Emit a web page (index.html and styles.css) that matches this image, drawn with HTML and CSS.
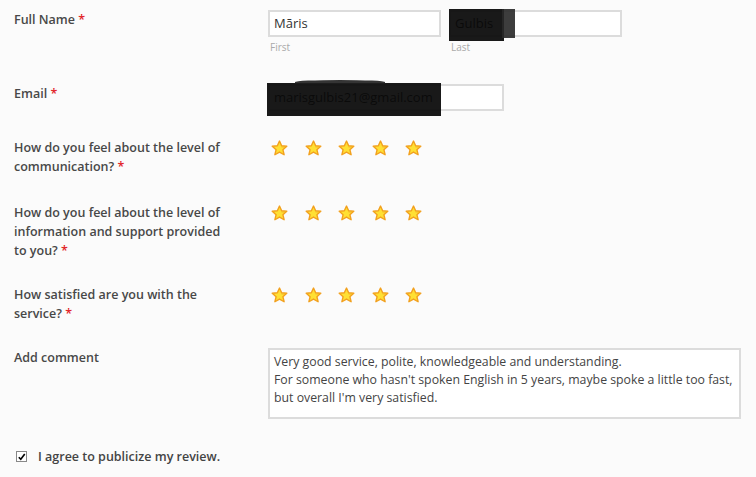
FILE: index.html
```html
<!DOCTYPE html>
<html lang="en">
<head>
<meta charset="utf-8">
<title>Review form</title>
<link rel="stylesheet" href="styles.css">
</head>
<body>
<form class="form">
  <div class="row row-name">
    <div class="label">Full Name <span class="req">*</span></div>
    <div class="names">
      <div class="name-field">
        <div class="input"><span class="val">Māris</span></div>
        <div class="sub">First</div>
      </div>
      <div class="name-field">
        <div class="input redact-wrap"><span class="val">Gulbis</span><span class="redact redact-last"></span><span class="redact redact-last2"></span></div>
        <div class="sub">Last</div>
      </div>
    </div>
  </div>

  <div class="row row-email">
    <div class="label">Email <span class="req">*</span></div>
    <div class="field">
      <div class="input input-email redact-wrap"><span class="val">marisgulbis21@gmail.com</span><span class="redact redact-email"></span><span class="redact redact-email-top"></span></div>
    </div>
  </div>

  <div class="row row-q1">
    <div class="label">How do you feel about the level of communication? <span class="req">*</span></div>
    <div class="stars" id="s1"></div>
  </div>

  <div class="row">
    <div class="label">How do you feel about the level of information and support provided to you? <span class="req">*</span></div>
    <div class="stars" id="s2"></div>
  </div>

  <div class="row">
    <div class="label">How satisfied are you with the service? <span class="req">*</span></div>
    <div class="stars" id="s3"></div>
  </div>

  <div class="row">
    <div class="label">Add comment</div>
    <div class="textarea">Very good service, polite, knowledgeable and understanding.<br>For someone who hasn't spoken English in 5 years, maybe spoke a little too fast,<br>but overall I'm very satisfied.</div>
  </div>

  <div class="agree">
    <span class="check"><svg viewBox="0 0 10 10" width="10" height="10"><path d="M2 5.2 L4.2 7.6 L8.6 1.6" fill="none" stroke="#000" stroke-width="1.8"/></svg></span>
    <span class="agree-text">I agree to publicize my review.</span>
  </div>
</form>
<script>
  var star = '<svg class="star" viewBox="0 0 24 24" width="19" height="19"><path d="M12 2.6 L14.7 8.6 L21.2 9.2 L16.3 13.5 L17.8 19.9 L12 16.5 L6.2 19.9 L7.7 13.5 L2.8 9.2 L9.3 8.6 Z" fill="#ffe033" stroke="#f2a11f" stroke-width="1.8" stroke-linejoin="round"/><path d="M14.2 9.9 L17.6 10.4" stroke="#f2b32a" stroke-width="1" fill="none"/></svg>';
  ['s1','s2','s3'].forEach(function(id){
    document.getElementById(id).innerHTML = star+star+star+star+star;
  });
</script>
</body>
</html>
```
FILE: styles.css
```css
* { box-sizing: border-box; }
body {
  margin: 0;
  background: #fbfbfb;
  font-family: "Open Sans", "Liberation Sans", sans-serif;
  color: #444;
}
.form {
  padding: 10px 0 0 14px;
}
.row {
  display: grid;
  grid-template-columns: 254px 1fr;
  margin-bottom: 25px;
}
.row-name { margin-bottom: 30px; }
.row-email { margin-bottom: 27px; }
.row-q1 { margin-bottom: 27px; }
.label {
  font-size: 12.5px;
  font-weight: 600;
  line-height: 19px;
  width: 220px;
  color: #484848;
}
.req { color: #e2262a; }
.names {
  display: flex;
  gap: 8px;
}
.name-field { width: 173px; }
.input {
  position: relative;
  height: 27px;
  border: 2px solid #dcdcdc;
  background: #fff;
  font-size: 13px;
  line-height: 23px;
  padding-left: 4px;
  color: #333;
  overflow: hidden;
}
.input-email { width: 236px; }
.sub {
  font-size: 10px;
  color: #aaa;
  margin-top: 3px;
  padding-left: 2px;
  line-height: 14px;
}
.redact-wrap { overflow: visible; }
.redact {
  position: absolute;
  background: rgba(8, 8, 8, 0.93);
}
.redact-last { left: -2px; top: -3px; width: 55px; height: 32px; }
.redact-last2 { left: 51px; top: -3px; width: 13px; height: 29px; background: rgba(40,40,40,0.9); }
.redact-email { left: -3px; top: -3px; width: 174px; height: 33px; }
.redact-email-top { left: 25px; top: -6px; width: 90px; height: 4px; border-radius: 50% 50% 0 0; background: rgba(30,30,30,0.9); }
.stars {
  display: flex;
  gap: 14.5px;
  padding-left: 2px;
  padding-top: 1px;
}
.star { display: block; }
.textarea {
  width: 473px;
  height: 71px;
  border: 2px solid #dcdcdc;
  background: #fff;
  font-size: 12.3px;
  line-height: 18px;
  padding: 3px 0 0 4px;
  color: #444;
  white-space: nowrap;
}
.agree {
  display: flex;
  align-items: center;
  margin-top: 28px;
  padding-left: 2px;
}
.check {
  width: 11px;
  height: 11px;
  border: 1px solid #888;
  background: #fff;
  display: flex;
  align-items: center;
  justify-content: center;
}
.check svg { display: block; }
.agree-text {
  margin-left: 11px;
  font-size: 12.5px;
  font-weight: 600;
  line-height: 19px;
}
```
